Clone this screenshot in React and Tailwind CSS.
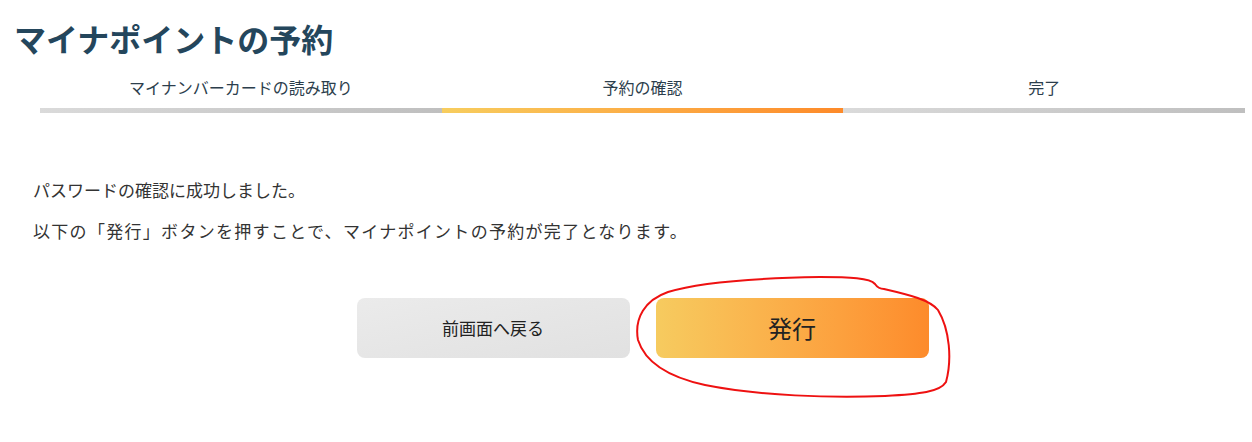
const steps = [
  { label: "マイナンバーカードの読み取り", bar: "bg-gradient-to-r from-[#dadada] to-[#bfbfbf]" },
  { label: "予約の確認", bar: "bg-gradient-to-r from-[#f7cd5e] to-[#fd8a29]" },
  { label: "完了", bar: "bg-gradient-to-r from-[#dadada] to-[#bfbfbf]" },
];

const App = () => {
  return (
    <div className="relative w-[1252px] h-[442px] bg-white overflow-hidden font-['Noto_Sans_CJK_JP',sans-serif]">
      {/* Title */}
      <h1 className="pl-[14px] pt-[18px] text-[32px] leading-[40px] font-bold text-[#24465c]">
        マイナポイントの予約
      </h1>

      {/* Steps */}
      <div className="ml-[40px] mr-[7px] mt-[17px] grid grid-cols-3">
        {steps.map((s) => (
          <div key={s.label} className="flex flex-col">
            <div className="text-center text-[16px] leading-[24px] text-[#2c3e4c]">{s.label}</div>
            <div className={`mt-[9px] h-[5px] ${s.bar}`}></div>
          </div>
        ))}
      </div>

      {/* Message */}
      <div className="pl-[33px] mt-[65px] text-[17px] leading-[24px] text-[#333333]">
        <p>パスワードの確認に成功しました。</p>
        <p className="mt-[17px] tracking-[1.3px]">以下の「発行」ボタンを押すことで、マイナポイントの予約が完了となります。</p>
      </div>

      {/* Buttons */}
      <div className="ml-[40px] mr-[7px] mt-[55px] flex justify-center gap-[26px]">
        <button className="w-[273px] h-[60px] rounded-[8px] bg-gradient-to-br from-[#ebebeb] to-[#e1e1e1] text-[17px] text-[#222222]">
          前画面へ戻る
        </button>
        <button className="w-[273px] h-[60px] rounded-[8px] bg-gradient-to-r from-[#f6cb5f] to-[#fd8b2b] text-[24px] text-[#222222]">
          発行
        </button>
      </div>

      {/* Hand-drawn annotation */}
      <svg className="absolute inset-0 pointer-events-none" width="1252" height="442" viewBox="0 0 1252 442">
        <path
          d="M875 284 C877 287 880 289 884 289 C910 295 930 300 938 310 C950 330 952 360 946 382 C940 392 920 394 885 396 C830 398 760 396 705 385 C668 377 645 362 638 340 C634 318 645 300 668 292 C700 282 760 278 820 277 C850 277 870 278 875 284 Z"
          fill="none"
          stroke="#ee1111"
          strokeWidth="2"
          strokeLinejoin="round"
        />
      </svg>
    </div>
  );
};

export default App;
